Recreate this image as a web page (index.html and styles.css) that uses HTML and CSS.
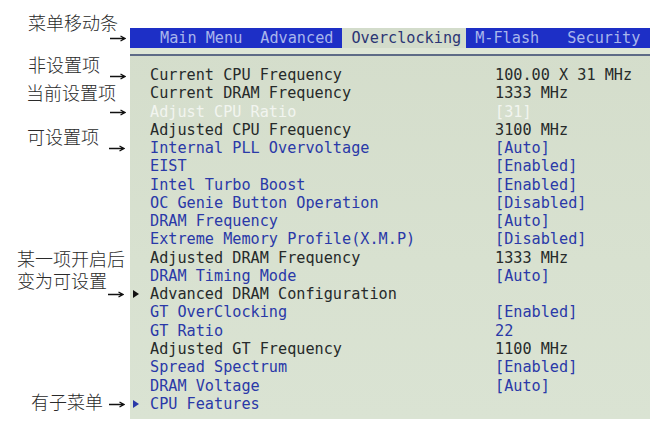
FILE: index.html
```html
<!DOCTYPE html>
<html lang="zh-CN">
<head>
    <meta charset="UTF-8">
    <title>BIOS Overclocking</title>
    <link rel="stylesheet" href="styles.css">
</head>
<body>
    <div class="notes">
        <div class="note n1">菜单移动条</div>
        <div class="note n2">非设置项</div>
        <div class="note n3">当前设置项</div>
        <div class="note n4">可设置项</div>
        <div class="note n5">某一项开启后</div>
        <div class="note n5b">变为可设置</div>
        <div class="note n6">有子菜单</div>

        <svg class="arrow a1" width="16" height="7" viewBox="0 0 16 7"><path d="M0 3.5H14M10.5 1L15 3.5L10.5 6" /></svg>
        <svg class="arrow a2" width="16" height="7" viewBox="0 0 16 7"><path d="M0 3.5H14M10.5 1L15 3.5L10.5 6" /></svg>
        <svg class="arrow a3" width="16" height="7" viewBox="0 0 16 7"><path d="M0 3.5H14M10.5 1L15 3.5L10.5 6" /></svg>
        <svg class="arrow a4" width="16" height="7" viewBox="0 0 16 7"><path d="M0 3.5H14M10.5 1L15 3.5L10.5 6" /></svg>
        <svg class="arrow a5" width="16" height="7" viewBox="0 0 16 7"><path d="M0 3.5H14M10.5 1L15 3.5L10.5 6" /></svg>
        <svg class="arrow a6" width="16" height="7" viewBox="0 0 16 7"><path d="M0 3.5H14M10.5 1L15 3.5L10.5 6" /></svg>
    </div>

    <div class="bios">
        <div class="menubar">
            <span class="tab">Main Menu</span>
            <span class="tab">Advanced</span>
            <span class="tab active">Overclocking</span>
            <span class="tab">M-Flash</span>
            <span class="tab last">Security</span>
        </div>
        <div class="rule"></div>

        <div class="items">
            <div class="row"><span></span><span>Current CPU Frequency</span><span>100.00 X 31 MHz</span></div>
            <div class="row"><span></span><span>Current DRAM Frequency</span><span>1333 MHz</span></div>
            <div class="row current"><span></span><span>Adjust CPU Ratio</span><span>[31]</span></div>
            <div class="row"><span></span><span>Adjusted CPU Frequency</span><span>3100 MHz</span></div>
            <div class="row set"><span></span><span>Internal PLL Overvoltage</span><span>[Auto]</span></div>
            <div class="row set"><span></span><span>EIST</span><span>[Enabled]</span></div>
            <div class="row set"><span></span><span>Intel Turbo Boost</span><span>[Enabled]</span></div>
            <div class="row set"><span></span><span>OC Genie Button Operation</span><span>[Disabled]</span></div>
            <div class="row set"><span></span><span>DRAM Frequency</span><span>[Auto]</span></div>
            <div class="row set"><span></span><span>Extreme Memory Profile(X.M.P)</span><span>[Disabled]</span></div>
            <div class="row"><span></span><span>Adjusted DRAM Frequency</span><span>1333 MHz</span></div>
            <div class="row set"><span></span><span>DRAM Timing Mode</span><span>[Auto]</span></div>
            <div class="row"><span class="marker"></span><span>Advanced DRAM Configuration</span><span></span></div>
            <div class="row set"><span></span><span>GT OverClocking</span><span>[Enabled]</span></div>
            <div class="row set"><span></span><span>GT Ratio</span><span>22</span></div>
            <div class="row"><span></span><span>Adjusted GT Frequency</span><span>1100 MHz</span></div>
            <div class="row set"><span></span><span>Spread Spectrum</span><span>[Enabled]</span></div>
            <div class="row set"><span></span><span>DRAM Voltage</span><span>[Auto]</span></div>
            <div class="row set"><span class="marker"></span><span>CPU Features</span><span></span></div>
        </div>
    </div>
</body>
</html>
```

FILE: styles.css
```css
body {
    margin: 0;
    background: #ffffff;
    display: flex;
    height: 422px;
    overflow: hidden;
}

/* left side callouts */
.notes {
    position: relative;
    width: 130px;
    flex-shrink: 0;
}
.note {
    position: absolute;
    font-family: "Noto Sans CJK SC", sans-serif;
    font-size: 18px;
    font-weight: 300;
    line-height: 18px;
    color: #2a2a2a;
    white-space: nowrap;
}
.n1 { left: 28px; top: 13px; }
.n2 { left: 28px; top: 55px; }
.n3 { left: 26px; top: 83px; }
.n4 { left: 27px; top: 127px; }
.n5 { left: 17px; top: 249px; }
.n5b { left: 17px; top: 271px; }
.n6 { left: 31px; top: 392px; }

.arrow {
    position: absolute;
    fill: none;
    stroke: #111;
    stroke-width: 1.3;
}
.a1 { left: 110px; top: 35px; }
.a2 { left: 110px; top: 73px; }
.a3 { left: 110px; top: 109px; }
.a4 { left: 109px; top: 145px; }
.a5 { left: 108px; top: 291px; }
.a6 { left: 109px; top: 401px; }

/* bios screen */
.bios {
    flex: 1;
    margin-top: 28px;
    height: 391px;
    background: linear-gradient(180deg, #d4ddcb 0%, #d8e1d0 60%, #dae3d3 100%);
    font-family: "DejaVu Sans Mono", "Liberation Mono", monospace;
    font-size: 15.2px;
}
.menubar {
    display: flex;
    height: 20px;
    line-height: 20px;
    padding-left: 21px;
    background: #1d2fc6;
    white-space: pre;
}
.tab {
    padding: 0 9px;
    color: #a9b6ec;
}
.tab.active {
    padding: 0 5px 0 9px;
    background: #d3dccb;
    color: #2b3574;
}
.tab.last {
    margin-left: 10px;
}
.rule {
    height: 6px;
    background: #dee6d6;
    border-bottom: 2px solid #5e6b86;
}
.items {
    padding-top: 10px;
}
.row {
    display: grid;
    grid-template-columns: 20px 345px auto;
    height: 18.28px;
    line-height: 18.28px;
    color: #262a2a;
    white-space: pre;
}
.row.set {
    color: #2a39a8;
}
.row.current {
    color: #f2f5f0;
}
.marker {
    align-self: center;
    justify-self: start;
    margin-left: 3px;
    width: 0;
    height: 0;
    border-top: 4px solid transparent;
    border-bottom: 4px solid transparent;
    border-left: 6px solid currentColor;
}
.row:not(.set) .marker {
    border-left-color: #111;
}
```
